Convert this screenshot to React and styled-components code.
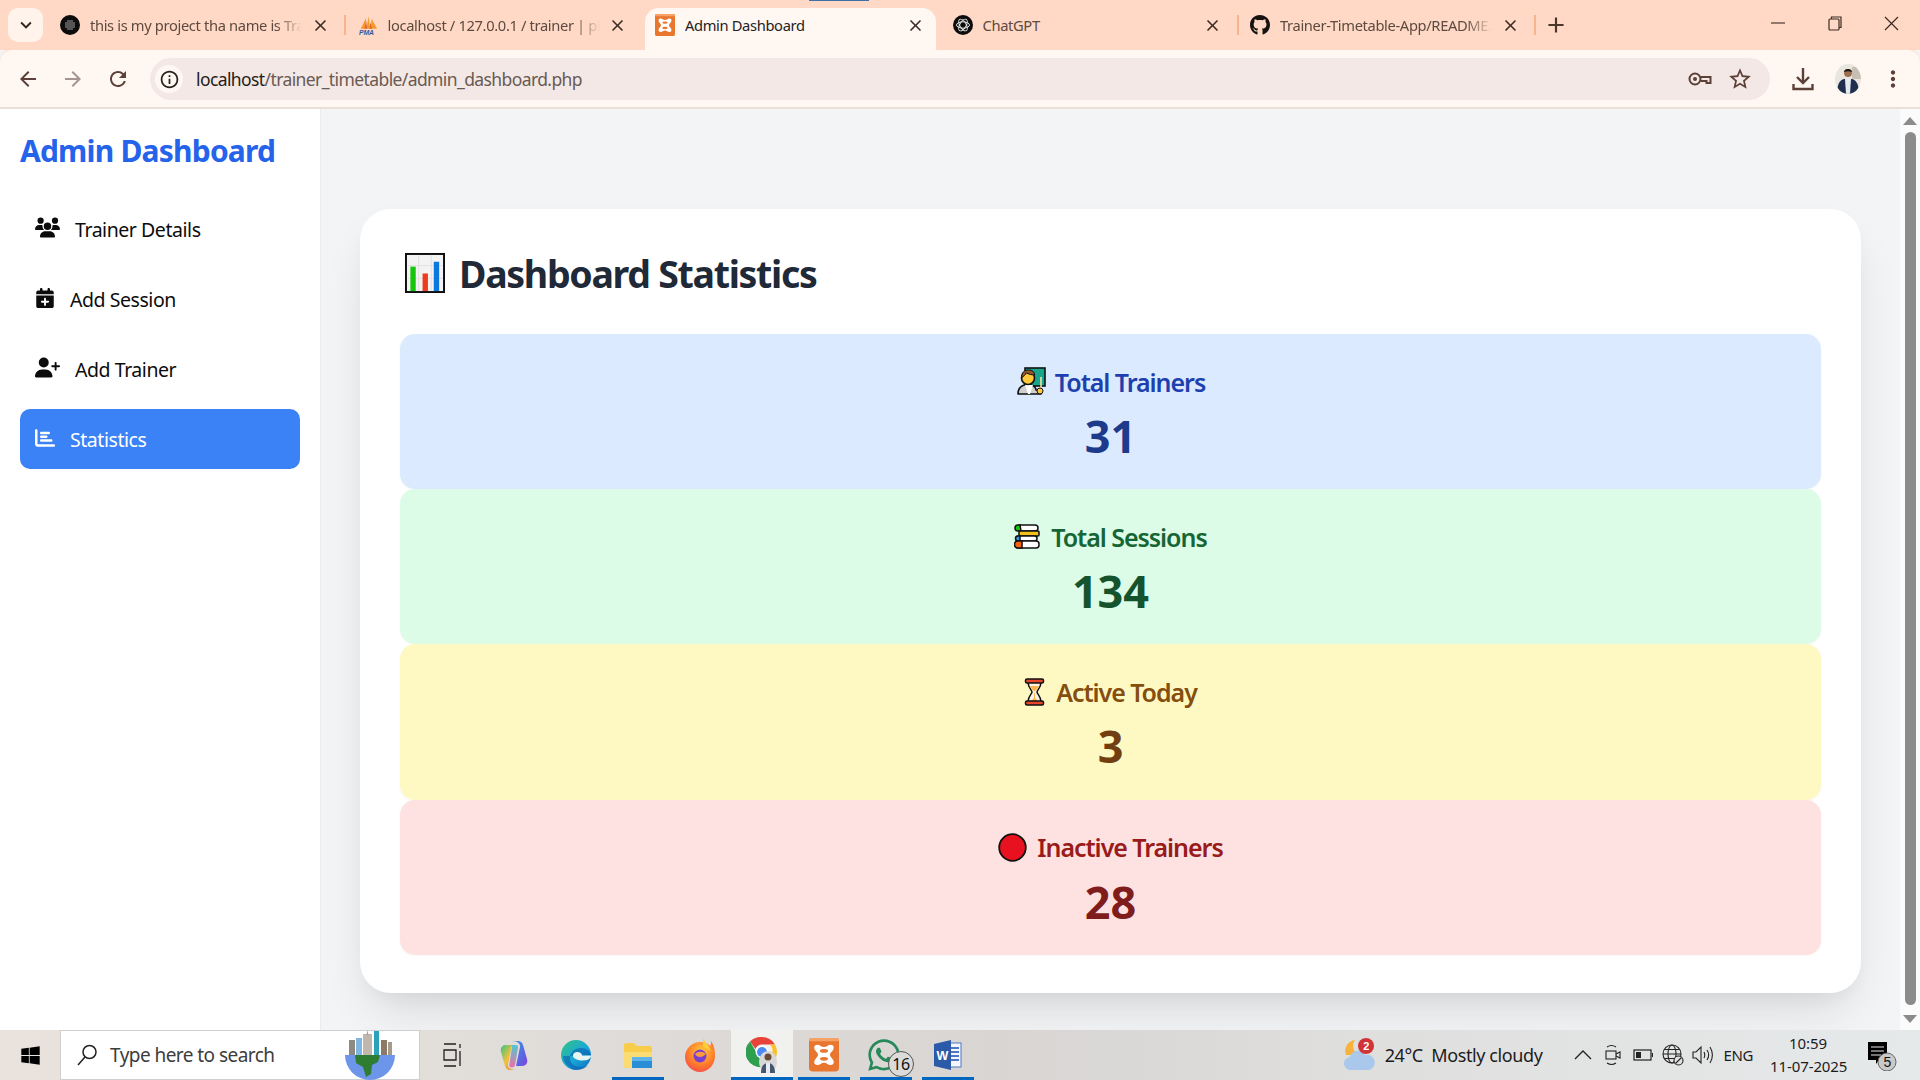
import React from 'react'
import styled, { createGlobalStyle } from 'styled-components'
import { FaUsers, FaCalendarPlus, FaUserPlus, FaChartBar, FaGithub, FaWhatsapp, FaWindows } from 'react-icons/fa6'
import { MdArrowBack, MdArrowForward, MdRefresh, MdInfoOutline, MdStarBorder, MdMoreVert, MdKeyboardArrowDown, MdClose, MdAdd } from 'react-icons/md'

const GlobalStyle = createGlobalStyle`
  html, body {
    margin: 0;
    padding: 0;
    width: 1920px;
    height: 1080px;
    overflow: hidden;
    background: #f3f4f6;
    font-family: 'Noto Sans', 'Open Sans', sans-serif;
  }
  * { box-sizing: border-box; }
`

const Screen = styled.div`
  width: 1920px;
  height: 1080px;
  display: flex;
  flex-direction: column;
  overflow: hidden;
`

/* browser tabs */
const TabStrip = styled.div`
  height: 50px;
  flex: none;
  display: flex;
  align-items: flex-end;
  background: #ffd9c5;
  position: relative;
`

const LoadingBar = styled.div`
  position: absolute;
  top: 0;
  left: 809px;
  width: 60px;
  height: 1px;
  background: #3f6fa8;
`

const TabMenu = styled.div`
  width: 35px;
  height: 34px;
  margin: 0 7px 8px 8px;
  border-radius: 10px;
  background: #fff3eb;
  display: flex;
  align-items: center;
  justify-content: center;
  font-size: 22px;
  color: #33241d;
`

const Tab = styled.div`
  width: ${p => (p.$active ? '291px' : '297.5px')};
  margin-right: ${p => (p.$active ? '6.500px' : '0')};
  height: 42px;
  flex: none;
  display: flex;
  align-items: center;
  padding: 0 0 8px 10px;
  position: relative;
  color: ${p => (p.$active ? '#26201d' : '#5d4a40')};
  background: ${p => (p.$active ? '#fff7f2' : 'transparent')};
  border-radius: 14px 14px 0 0;

  &::after {
    content: '';
    display: ${p => (p.$sep ? 'block' : 'none')};
    position: absolute;
    left: 294px;
    top: 7px;
    width: 2px;
    height: 20px;
    background: #f7b48d;
  }
`

const Favicon = styled.div`
  width: 20px;
  height: 20px;
  flex: none;
  display: flex;
  align-items: center;
  justify-content: center;
  font-size: 22px;
  color: #17120f;
`

const TabTitle = styled.div`
  width: 212px;
  margin-left: 10px;
  overflow: hidden;
  white-space: nowrap;
  font-size: 14.7px;
  letter-spacing: -0.35px;
  -webkit-mask-image: ${p => (p.$fade ? 'linear-gradient(90deg, #000 88%, transparent 100%)' : 'none')};
  mask-image: ${p => (p.$fade ? 'linear-gradient(90deg, #000 88%, transparent 100%)' : 'none')};
`

const TabClose = styled.div`
  width: 20px;
  display: flex;
  justify-content: center;
  margin-left: 8px;
  font-size: 19px;
  color: #3a2a22;
`

const NewTab = styled.div`
  width: 30px;
  height: 42px;
  margin-left: 3px;
  padding-bottom: 8px;
  display: flex;
  align-items: center;
  justify-content: center;
  font-size: 26px;
  color: #4a362b;
`

const WindowControls = styled.div`
  margin-left: auto;
  height: 50px;
  display: flex;
  align-items: center;
  padding-bottom: 4px;
`

const WindowButton = styled.div`
  width: 57px;
  display: flex;
  justify-content: center;
`

/* toolbar with the address bar */
const Toolbar = styled.div`
  height: 59px;
  flex: none;
  display: flex;
  align-items: center;
  padding: 1px 0 0 5px;
  background: #fff7f2;
  border-bottom: 2px solid #ebe0d9;
  border-radius: 12px 12px 0 0;
  box-shadow: 0 -1px 0 #ffd9c5;
`

const ToolButton = styled.div`
  width: ${p => p.$w || 45}px;
  flex: none;
  display: flex;
  align-items: center;
  justify-content: center;
  font-size: ${p => p.$size || 24}px;
  color: ${p => p.$color || '#5d4037'};
`

const AddressBar = styled.div`
  width: 1620px;
  height: 42px;
  margin: 0 10px;
  flex: none;
  display: flex;
  align-items: center;
  padding: 0 0 0 5px;
  border-radius: 21px;
  background: #f3e8e6;
`

const SiteInfo = styled.div`
  width: 28px;
  height: 28px;
  border-radius: 50%;
  background: #fff7f2;
  display: flex;
  align-items: center;
  justify-content: center;
  font-size: 21px;
  color: #2b211c;
`

const Url = styled.div`
  margin-left: 13px;
  font-size: 17.5px;
  letter-spacing: -0.6px;
  color: #6a5a52;

  b {
    font-weight: 400;
    color: #251c18;
  }
`

const AddressIcons = styled.div`
  margin-left: auto;
  display: flex;
  align-items: center;
  padding-right: 10px;
`

/* page */
const Content = styled.div`
  flex: 1;
  min-height: 0;
  display: flex;
`

const Sidebar = styled.aside`
  width: 321px;
  flex: none;
  background: #ffffff;
  border-right: 1px solid #ebecee;
  padding: 17px 20px 0;
`

const Brand = styled.h1`
  margin: 0 0 23px;
  font-size: 30px;
  line-height: 50px;
  font-weight: 700;
  letter-spacing: -0.8px;
  color: #2563eb;
  white-space: nowrap;
`

const NavList = styled.nav`
  display: flex;
  flex-direction: column;
  gap: 10px;
`

const NavItem = styled.div`
  height: 60px;
  display: flex;
  align-items: center;
  padding-left: 15px;
  border-radius: 10px;
  font-size: 19.5px;
  letter-spacing: -0.45px;
  color: ${p => (p.$active ? '#ffffff' : '#0c0c0c')};
  background: ${p => (p.$active ? '#3b82f6' : 'transparent')};

  svg {
    font-size: ${p => p.$icon || 20}px;
    margin-right: 15px;
    margin-top: -3px;
    flex: none;
  }
`

const Main = styled.main`
  flex: 1;
  min-width: 0;
  background: #f3f4f6;
  padding: 100px 39px 0 39px;
  overflow: hidden;
`

const Card = styled.section`
  height: 784px;
  padding: 33px 40px 40px;
  background: #ffffff;
  border-radius: 31px;
  box-shadow: 0 25px 50px -12px rgba(0, 0, 0, 0.12), 0 10px 20px -8px rgba(0, 0, 0, 0.06);
`

const CardTitle = styled.h2`
  margin: 0 0 30px;
  height: 62px;
  display: flex;
  align-items: center;
  gap: 14px;
  padding-left: 5px;
  font-size: 37.5px;
  font-weight: 700;
  letter-spacing: -1.3px;
  color: #1f2937;

  svg { flex: none; }
`

const StatList = styled.div`
  display: flex;
  flex-direction: column;
`

const StatCard = styled.div`
  height: 155.2px;
  padding-top: 30px;
  display: flex;
  flex-direction: column;
  align-items: center;
  border-radius: 15px;
  background: ${p => p.$bg};
  box-shadow: 0 1px 3px rgba(0, 0, 0, 0.04);
`

const StatLabel = styled.div`
  height: 35px;
  display: flex;
  align-items: center;
  gap: ${p => p.$gap || 10}px;
  font-size: 25px;
  font-weight: 600;
  letter-spacing: -1.05px;
  color: ${p => p.$color};
  white-space: nowrap;

  svg { flex: none; }
`

const StatValue = styled.div`
  margin-top: 12px;
  font-size: 45px;
  line-height: 50px;
  font-weight: 700;
  color: ${p => p.$color};
`

const Scrollbar = styled.div`
  width: 20px;
  flex: none;
  background: #fbfbfb;
  display: flex;
  flex-direction: column;
  align-items: center;
  padding: 8px 0 7px;
`

const ScrollThumb = styled.div`
  flex: 1;
  width: 11px;
  margin: 7px 0 10px;
  border-radius: 6px;
  background: #8b8b8b;
`

/* windows taskbar */
const Taskbar = styled.footer`
  height: 50px;
  flex: none;
  display: flex;
  align-items: center;
  background: linear-gradient(90deg, #eae2dc 0%, #dfdcd9 30%, #d8d5d3 52%, #dfdfde 72%, #e6e9ea 100%);
  color: #1c1c1c;
`

const StartButton = styled.div`
  width: 60px;
  display: flex;
  justify-content: center;
  font-size: 21px;
  color: #000;
`

const SearchBox = styled.div`
  width: 360px;
  height: 50px;
  display: flex;
  align-items: center;
  padding-left: 16px;
  background: #ffffff;
  border: 1px solid #cfcfcf;
  font-size: 19px;
  letter-spacing: -0.55px;
  color: #3d3d3d;
`

const SearchText = styled.span`
  margin-left: 13px;
`

const SearchArt = styled.div`
  margin-left: auto;
  margin-right: 23px;
  display: flex;
`

const TaskSlot = styled.div`
  width: ${p => p.$w || 62}px;
  height: 50px;
  flex: none;
  display: flex;
  align-items: center;
  justify-content: center;
  position: relative;
  background: ${p => (p.$focus ? '#f1f1f0' : 'transparent')};

  &::after {
    content: '';
    display: ${p => (p.$open ? 'block' : 'none')};
    position: absolute;
    bottom: 0;
    left: ${p => (p.$focus ? 0 : '5px')};
    right: ${p => (p.$focus ? 0 : '5px')};
    height: 3px;
    background: #0067c0;
  }
`

const Tray = styled.div`
  margin-left: auto;
  height: 50px;
  display: flex;
  align-items: center;
  font-size: 18px;
  letter-spacing: -0.4px;
`

const Weather = styled.div`
  display: flex;
  align-items: center;
  gap: 9px;
  margin-right: 25px;
`

const TrayIcon = styled.div`
  display: flex;
  align-items: center;
  justify-content: center;
  width: ${p => p.$w || 30}px;
`

const Lang = styled.div`
  font-size: 15px;
  margin: 0 17px 0 6px;
`

const Clock = styled.div`
  width: 76px;
  text-align: center;
  font-size: 15px;
  line-height: 23px;
  letter-spacing: -0.1px;
  white-space: nowrap;
`

const Notify = styled.div`
  width: 32px;
  margin: 0 21px 0 21px;
  display: flex;
`

/* drawings */
const ChartEmoji = () => (
  <svg width="40" height="40" viewBox="0 0 41 41">
    <rect x="1" y="1" width="39" height="39" fill="#f3f3f3" stroke="#0d0d0d" strokeWidth="2" />
    <path d="M2 13h37M2 26h37M14 2v37M27 2v37" stroke="#e0e0e0" strokeWidth="1" />
    <rect x="5.5" y="14" width="5.5" height="25" fill="#16c60c" />
    <rect x="18" y="21" width="5.5" height="18" fill="#ee3b1c" />
    <rect x="29.5" y="9" width="5.5" height="30" fill="#0a78dc" />
  </svg>
)

const TeacherEmoji = () => (
  <svg width="30" height="29" viewBox="0 0 30 29">
    <rect x="9" y="1" width="20" height="18" fill="#17a58c" stroke="#111" strokeWidth="1.6" />
    <path d="M2 27c0-6 3-8 6-9h7c3 1 5 3 5 5l5 1v3z" fill="#cfcfcf" stroke="#111" strokeWidth="1.6" strokeLinejoin="round" />
    <path d="M9 18l3 9h2l3-9z" fill="#fff" />
    <circle cx="12" cy="11" r="6.5" fill="#ffc83d" stroke="#111" strokeWidth="1.6" />
    <path d="M5.5 11c0-6 3-8 7-8s6 2 6 5c-3 0-6-1-8-2-1 2-3 3-5 5z" fill="#8e562e" stroke="#111" strokeWidth="1" />
    <path d="M25 10v14" stroke="#f4e3a4" strokeWidth="1.6" />
    <circle cx="24" cy="24" r="3" fill="#ffc83d" stroke="#111" strokeWidth="1" />
  </svg>
)

const BooksEmoji = () => (
  <svg width="26" height="25" viewBox="0 0 26 25">
    <g stroke="#111" strokeWidth="1.5">
      <rect x="3" y="1" width="21" height="6" rx="3" fill="#fff" />
      <path d="M6 1H4a3 3 0 0 0 0 6h3z" fill="#16c60c" />
      <rect x="5" y="7" width="20" height="5" rx="1" fill="#f2c11c" />
      <rect x="2" y="12" width="21" height="5" rx="2.5" fill="#fff" />
      <path d="M6 12H4a2.5 2.5 0 0 0 0 5h2z" fill="#2d9bf0" />
      <rect x="1" y="17" width="24" height="7" rx="3" fill="#fff" />
      <path d="M8 17H4a3.5 3.5 0 0 0 0 7h4z" fill="#f7630c" />
    </g>
  </svg>
)

const HourglassEmoji = () => (
  <svg width="21" height="28" viewBox="0 0 21 28">
    <path d="M4 4c0 6 4 8 4 10s-4 4-4 10h13c0-6-4-8-4-10s4-4 4-10z" fill="#fdf3e4" stroke="#111" strokeWidth="1.5" />
    <path d="M6 8h9c-1 3-3 4-4.500 5.500C9 12 7 11 6 8zM10 15h1v5l4 4H6l4-4z" fill="#f9b54a" />
    <rect x="1.500" y="1" width="18" height="4" rx="1.500" fill="#e9452a" stroke="#111" strokeWidth="1.5" />
    <rect x="1.500" y="23" width="18" height="4" rx="1.500" fill="#e9452a" stroke="#111" strokeWidth="1.5" />
  </svg>
)

const RedCircleEmoji = () => (
  <svg width="29" height="29" viewBox="0 0 29 29">
    <circle cx="14.500" cy="14.500" r="13.300" fill="#e8111f" stroke="#111" strokeWidth="1.800" />
  </svg>
)

const DotsFavicon = () => (
  <svg width="20" height="20" viewBox="0 0 20 20">
    <circle cx="10" cy="10" r="10" fill="#0c0c0c" />
    {[-4, -2, 0, 2, 4].flatMap(x => [-4, -2, 0, 2, 4].map(y => (
      Math.hypot(x, y) < 5.2 ? <circle key={`${x}${y}`} cx={10 + x} cy={10 + y} r="0.8" fill="#b5b5b5" /> : null
    )))}
  </svg>
)

const PmaFavicon = () => (
  <svg width="22" height="22" viewBox="0 0 22 22">
    <path d="M3 15L9 3l-1 12zM9 15l3-14 1 14zM14 15l1-11 6 11z" fill="#f39a2c" />
    <path d="M7 15l2-9 1 9zM12.500 15l1-7 2 7z" fill="#e4632a" />
    <text x="1" y="21.500" fontSize="7.500" fontWeight="700" fontStyle="italic" fill="#2c5aa0" fontFamily="Liberation Sans, sans-serif">PMA</text>
  </svg>
)

const XamppLogo = ({ size = 20 }) => (
  <svg width={size} height={size * 1.12} viewBox="0 0 20 22.400" preserveAspectRatio="none">
    <rect width="20" height="22.400" rx="2.500" fill="#e8762f" />
    <rect width="20" height="2.200" rx="1.100" fill="#f6a266" />
    <path d="M5.500 4.500C7.500 4.500 8 6 10 6s2.500-1.500 4.500-1.500c2 0 2.500 2 1.500 3.500-1 1.500-2 2-2 3.200s1 1.800 2 3.300c1 1.500.500 3.500-1.500 3.500-2 0-2.500-1.500-4.500-1.500S7.500 18 5.500 18c-2 0-2.500-2-1.500-3.500 1-1.500 2-2.100 2-3.300S5 9.500 4 8c-1-1.500-.500-3.500 1.500-3.500z" fill="#fff" />
    <ellipse cx="10" cy="8.600" rx="2.700" ry="1.200" fill="#e8762f" />
    <ellipse cx="10" cy="13.900" rx="2.700" ry="1.200" fill="#e8762f" />
  </svg>
)

const GptFavicon = () => (
  <svg width="20" height="20" viewBox="0 0 20 20">
    <circle cx="10" cy="10" r="10" fill="#0c0c0c" />
    <g fill="none" stroke="#e8e8e8" strokeWidth="1">
      <ellipse cx="10" cy="10" rx="6.500" ry="3.200" />
      <ellipse cx="10" cy="10" rx="6.500" ry="3.200" transform="rotate(60 10 10)" />
      <ellipse cx="10" cy="10" rx="6.500" ry="3.200" transform="rotate(120 10 10)" />
    </g>
  </svg>
)

const KeyIcon = () => (
  <svg width="24" height="16" viewBox="0 0 24 16" fill="none" stroke="#5d4037" strokeWidth="2">
    <circle cx="7" cy="8" r="5.500" />
    <circle cx="7" cy="8" r="2" fill="#5d4037" stroke="none" />
    <path d="M12.500 6H22.500V12H18.500V10H12.500" />
  </svg>
)

const DownloadIcon = () => (
  <svg width="22" height="24" viewBox="0 0 22 24" fill="none" stroke="#5d4037" strokeWidth="2.400">
    <path d="M11 1v14M5 10l6 6 6-6" />
    <path d="M1.500 17v5h19v-5" />
  </svg>
)

const Avatar = ({ size = 26 }) => (
  <svg width={size} height={size * 1.15} viewBox="0 0 26 30">
    <defs><clipPath id="avatarClip"><ellipse cx="13" cy="15" rx="13" ry="15" /></clipPath></defs>
    <g clipPath="url(#avatarClip)">
      <rect width="26" height="30" fill="#e9e5df" />
      <rect x="17" y="3" width="9" height="12" fill="#c7bfb3" />
      <path d="M2 30c0-10 3-14 7-15h8c4 1 7 5 7 15z" fill="#1d2f4d" />
      <path d="M10 15h6l-1 15h-4z" fill="#e6e9f0" />
      <circle cx="13" cy="9" r="4" fill="#9d6e4e" />
      <path d="M9 8c0-4 8-4 8 0-3-1-5-1-8 0z" fill="#1b1512" />
    </g>
  </svg>
)

const MinimizeIcon = () => (
  <svg width="14" height="2" viewBox="0 0 14 2"><path d="M0 1h14" stroke="#4a3a30" strokeWidth="1.200" /></svg>
)

const RestoreIcon = () => (
  <svg width="14" height="15" viewBox="0 0 14 15" fill="none" stroke="#3a2c24" strokeWidth="1.200">
    <rect x="1" y="3" width="10" height="11" rx="1" />
    <path d="M3.500 3V1h9.500v10.500h-2" />
  </svg>
)

const CloseIcon = () => (
  <svg width="15" height="15" viewBox="0 0 15 15"><path d="M1 1l13 13M14 1L1 14" stroke="#3a2c24" strokeWidth="1.200" /></svg>
)

const SearchIcon = () => (
  <svg width="20" height="22" viewBox="0 0 20 22" fill="none" stroke="#222" strokeWidth="1.500">
    <circle cx="12.500" cy="8" r="6.500" />
    <path d="M8 13L1 21" />
  </svg>
)

const GlobeArt = () => (
  <svg width="52" height="50" viewBox="0 0 52 50">
    <rect x="5" y="10" width="6" height="17" fill="#8e8a80" />
    <rect x="12" y="8" width="6" height="19" fill="#7fb6e2" />
    <rect x="19" y="4" width="9" height="23" fill="#c2b7ac" />
    <path d="M23.500 0l1 5h-2z" fill="#a89c90" />
    <rect x="30" y="1" width="5" height="26" fill="#2aa3b8" />
    <rect x="37" y="10" width="6" height="17" fill="#8c7a68" />
    <rect x="44" y="12" width="4" height="15" fill="#a59a8a" />
    <path d="M1 25h50a25 25 0 0 1-50 0z" fill="#6d96ea" />
    <path d="M11 25h25l-2 7-6 3-1 9-5 3-3-10-7-4z" fill="#2f7d32" />
  </svg>
)

const TaskViewIcon = () => (
  <svg width="18" height="24" viewBox="0 0 18 24" fill="none" stroke="#222" strokeWidth="1.300">
    <path d="M1 1h12M1 23h12M1 7h12v10H1zM17 1v4M17 8v15" />
  </svg>
)

const CopilotIcon = () => (
  <svg width="28" height="31" viewBox="0 0 28 31">
    <defs>
      <linearGradient id="copA" x1="0" y1="0" x2="1" y2="1"><stop offset="0" stopColor="#2f9de8" /><stop offset="1" stopColor="#7a45dc" /></linearGradient>
      <linearGradient id="copB" x1="0" y1="0" x2="1" y2="1"><stop offset="0" stopColor="#36c28a" /><stop offset="0.5" stopColor="#f2c23a" /><stop offset="1" stopColor="#f0783a" /></linearGradient>
      <linearGradient id="copC" x1="0" y1="0" x2="0" y2="1"><stop offset="0" stopColor="#4fc7d0" /><stop offset="1" stopColor="#ee6fa8" /></linearGradient>
    </defs>
    <path d="M12 1h6c2 0 4 1 5 4l4 14c1 4-1 7-5 7h-6l4-19c.400-3-2-6-8-6z" fill="url(#copA)" />
    <path d="M16 30h-6c-2 0-4-1-5-4L1 12C0 8 2 5 6 5h6L8 24c-.400 3 2 6 8 6z" fill="url(#copB)" />
    <path d="M11 5h5c1.500 0 2.500 1 2 3l-3 17c-.300 1.500-1 2.500-3 2.500-2 0-3-1-2.700-3L12 7z" fill="url(#copC)" />
  </svg>
)

const EdgeIcon = () => (
  <svg width="30" height="30" viewBox="0 0 30 30">
    <defs>
      <linearGradient id="edgeA" x1="0" y1="0" x2="1" y2="1"><stop offset="0" stopColor="#33c481" /><stop offset="0.55" stopColor="#1aa7d8" /><stop offset="1" stopColor="#0c6cc4" /></linearGradient>
    </defs>
    <circle cx="15" cy="15" r="15" fill="url(#edgeA)" />
    <path d="M30 16c0-5-5-8-10-8-6 0-11 4-11 10 0 5 4 9 11 9 3 0 5-1 7-2-2 3-7 5-12 5-3 0-5-1-7-3C4 24 2 20 2 16" fill="#0a5fb0" opacity="0.6" />
    <path d="M16 12c3 0 5 1.500 5 3.500h9c0 1.500-1 5-8 5-5 0-10-1.500-10-5 0-2 2-3.500 4-3.500z" fill="#e8f6f3" />
  </svg>
)

const FolderIcon = () => (
  <svg width="30" height="26" viewBox="0 0 30 26">
    <path d="M1 3a2 2 0 0 1 2-2h8l3 3h13a2 2 0 0 1 2 2v18a2 2 0 0 1-2 2H3a2 2 0 0 1-2-2z" fill="#f8cd4c" />
    <path d="M1 10h28v14a2 2 0 0 1-2 2H3a2 2 0 0 1-2-2z" fill="#fbdc74" />
    <rect x="9" y="15" width="20" height="11" fill="#2a8ed6" />
    <rect x="9" y="15" width="20" height="4" fill="#5cb4e8" />
  </svg>
)

const FirefoxIcon = () => (
  <svg width="30" height="34" viewBox="0 0 30 34">
    <defs>
      <radialGradient id="foxA" cx="0.55" cy="0.35" r="0.8"><stop offset="0" stopColor="#ffd13c" /><stop offset="0.55" stopColor="#ff7a2a" /><stop offset="1" stopColor="#f0385c" /></radialGradient>
    </defs>
    <path d="M15 4c4 0 7 1 10 4 1-1 1-3 1-5 3 4 4 9 4 15 0 9-7 16-15 16S0 27 0 19C0 11 7 4 15 4z" fill="url(#foxA)" />
    <path d="M18 0c2 5 6 7 8 13l-8-4z" fill="#ffce3a" />
    <circle cx="15" cy="18" r="6.500" fill="#7a3fd1" />
    <path d="M10 16c3-3 8-3 11 0-2 1-3 3-6 3-2 0-4-1-5-3z" fill="#ff9a3a" />
  </svg>
)

const ChromeIcon = () => (
  <svg width="32" height="38" viewBox="0 0 32 38">
    <path d="M16 1a15 15 0 0 1 13 7.500H16a7 7 0 0 0-6.500 4.500L4 5.500A15 15 0 0 1 16 1z" fill="#e8443a" />
    <path d="M29 8.500A15 15 0 0 1 17 31l6.500-11a7 7 0 0 0 0-11.500z" fill="#fbc02d" />
    <path d="M4 5.500l6.500 11a7 7 0 0 0 8 6L17 31A15 15 0 0 1 4 5.500z" fill="#2e9e4f" />
    <circle cx="16" cy="16" r="6.500" fill="#fff" />
    <circle cx="16" cy="16" r="5" fill="#4c8bf5" />
    <ellipse cx="22" cy="26" rx="9" ry="11" fill="#d8d8d8" />
    <path d="M15 37c0-7 3-10 7-10s7 3 7 10z" fill="#45556e" />
    <path d="M20 27h4v10h-4z" fill="#e8ecf2" />
    <circle cx="22" cy="21" r="3.500" fill="#6b4b38" />
  </svg>
)

const WhatsappBadge = styled.div`
  width: 26px;
  height: 26px;
  position: absolute;
  left: 33px;
  top: 21px;
  border-radius: 50%;
  border: 1px solid #555;
  background: #dbdbd9;
  display: flex;
  align-items: center;
  justify-content: center;
  font-size: 16px;
  letter-spacing: -0.5px;
  color: #111;
`

const WhatsappGlyph = styled(FaWhatsapp)`
  font-size: 36px;
  color: #25895a;
  margin-left: -4px;
`

const WordIcon = () => (
  <svg width="28" height="30" viewBox="0 0 28 30">
    <rect x="8" y="3" width="19" height="24" fill="#f4f6fb" stroke="#4c79c4" />
    <path d="M17 8h8M17 12h8M17 16h8M17 20h8" stroke="#4c79c4" strokeWidth="1.800" />
    <path d="M0 4l17-4v30L0 26z" fill="#2b5aa8" />
    <text x="2.500" y="20" fontSize="12.500" fontWeight="700" fill="#fff" fontFamily="Liberation Sans, sans-serif">W</text>
  </svg>
)

const WeatherIcon = () => (
  <svg width="32" height="34" viewBox="0 0 32 34">
    <path d="M11 2a10 10 0 0 0 4 15H2A11 11 0 0 1 11 2z" fill="#f6b23c" />
    <path d="M7 32a6.500 6.500 0 0 1-1-13 8 8 0 0 1 15-2 7.500 7.500 0 0 1 4 15z" fill="#a9c8ec" />
    <circle cx="22" cy="8" r="8" fill="#d13438" />
    <text x="19.200" y="12" fontSize="11" fontWeight="700" fill="#fff" fontFamily="Liberation Sans, sans-serif">2</text>
  </svg>
)

const CaretIcon = () => (
  <svg width="18" height="10" viewBox="0 0 18 10" fill="none" stroke="#222" strokeWidth="1.300"><path d="M1 9l8-8 8 8" /></svg>
)

const MeetIcon = () => (
  <svg width="16" height="22" viewBox="0 0 16 22" fill="none" stroke="#222" strokeWidth="1.100">
    <path d="M2 3c3-2 6-2 9 0M2 19c3 2 6 2 9 0" />
    <rect x="1" y="7" width="10" height="8" />
    <path d="M11 10l4-2v6l-4-2" />
  </svg>
)

const BatteryIcon = () => (
  <svg width="20" height="12" viewBox="0 0 20 12" fill="none" stroke="#222" strokeWidth="1.200">
    <rect x="1" y="1" width="17" height="10" />
    <rect x="3" y="3" width="5" height="6" fill="#222" stroke="none" />
    <path d="M19.500 4v4" />
  </svg>
)

const NetIcon = () => (
  <svg width="22" height="22" viewBox="0 0 22 22" fill="none" stroke="#222" strokeWidth="1.100">
    <circle cx="10" cy="10" r="9" />
    <ellipse cx="10" cy="10" rx="4" ry="9" />
    <path d="M1 10h18M2.500 5.500h15M2.500 14.500h15" />
    <circle cx="16.500" cy="16.500" r="4.500" fill="#e2e1e0" />
    <path d="M13.500 19.500l6-6" />
  </svg>
)

const SpeakerIcon = () => (
  <svg width="22" height="20" viewBox="0 0 22 20" fill="none" stroke="#222" strokeWidth="1.100">
    <path d="M1 7h3l5-5v16l-5-5H1z" />
    <path d="M12 7c1 2 1 4 0 6M15 5c2 3 2 7 0 10M18 2c3 5 3 11 0 16" />
  </svg>
)

const NotifyIcon = () => (
  <svg width="32" height="32" viewBox="0 0 32 32">
    <path d="M1 3h19v18h-8l-3 4v-4H1z" fill="#000" />
    <path d="M4 8h13M4 12h13M4 16h10" stroke="#e8e8e8" strokeWidth="1.200" />
    <circle cx="20" cy="23" r="9" fill="#c9c9c9" stroke="#666" strokeWidth="1" />
    <text x="16.500" y="28" fontSize="14" fill="#111" fontFamily="Liberation Sans, sans-serif">5</text>
  </svg>
)

const tabs = [
  { title: 'this is my project tha name is Trainer', icon: <DotsFavicon />, sep: true, fade: true },
  { title: 'localhost / 127.0.0.1 / trainer | phpMyAdmin', icon: <PmaFavicon />, fade: true },
  { title: 'Admin Dashboard', icon: <XamppLogo size={20} />, active: true },
  { title: 'ChatGPT', icon: <GptFavicon />, sep: true },
  { title: 'Trainer-Timetable-App/README.md', icon: <FaGithub />, sep: true, fade: true },
]

const navItems = [
  { label: 'Trainer Details', icon: <FaUsers />, size: 25 },
  { label: 'Add Session', icon: <FaCalendarPlus /> },
  { label: 'Add Trainer', icon: <FaUserPlus />, size: 25 },
  { label: 'Statistics', icon: <FaChartBar />, active: true },
]

const stats = [
  { label: 'Total Trainers', value: 31, emoji: <TeacherEmoji />, bg: '#dbeafe', text: '#1e40af', num: '#1e3a8a', gap: 9 },
  { label: 'Total Sessions', value: 134, emoji: <BooksEmoji />, bg: '#dcfce7', text: '#166534', num: '#14532d', gap: 11 },
  { label: 'Active Today', value: 3, emoji: <HourglassEmoji />, bg: '#fef9c3', text: '#854d0e', num: '#713f12', gap: 11 },
  { label: 'Inactive Trainers', value: 28, emoji: <RedCircleEmoji />, bg: '#fee2e2', text: '#991b1b', num: '#7f1d1d', gap: 10 },
]

export default function App() {
  return (
    <Screen>
      <GlobalStyle />
      <TabStrip>
        <LoadingBar />
        <TabMenu><MdKeyboardArrowDown /></TabMenu>
        {tabs.map(t => (
          <Tab key={t.title} $active={t.active} $sep={t.sep}>
            <Favicon>{t.icon}</Favicon>
            <TabTitle $fade={t.fade}>{t.title}</TabTitle>
            <TabClose><MdClose /></TabClose>
          </Tab>
        ))}
        <NewTab><MdAdd /></NewTab>
        <WindowControls>
          <WindowButton><MinimizeIcon /></WindowButton>
          <WindowButton><RestoreIcon /></WindowButton>
          <WindowButton><CloseIcon /></WindowButton>
        </WindowControls>
      </TabStrip>

      <Toolbar>
        <ToolButton><MdArrowBack /></ToolButton>
        <ToolButton $color="#a3958d"><MdArrowForward /></ToolButton>
        <ToolButton><MdRefresh /></ToolButton>
        <AddressBar>
          <SiteInfo><MdInfoOutline /></SiteInfo>
          <Url><b>localhost</b>/trainer_timetable/admin_dashboard.php</Url>
          <AddressIcons>
            <ToolButton $w={40}><KeyIcon /></ToolButton>
            <ToolButton $w={40} $size={26}><MdStarBorder /></ToolButton>
          </AddressIcons>
        </AddressBar>
        <ToolButton><DownloadIcon /></ToolButton>
        <ToolButton><Avatar /></ToolButton>
        <ToolButton $size={26}><MdMoreVert /></ToolButton>
      </Toolbar>

      <Content>
        <Sidebar>
          <Brand>Admin Dashboard</Brand>
          <NavList>
            {navItems.map(item => (
              <NavItem key={item.label} $active={item.active} $icon={item.size}>
                {item.icon}
                {item.label}
              </NavItem>
            ))}
          </NavList>
        </Sidebar>

        <Main>
          <Card>
            <CardTitle>
              <ChartEmoji />
              Dashboard Statistics
            </CardTitle>
            <StatList>
              {stats.map(s => (
                <StatCard key={s.label} $bg={s.bg}>
                  <StatLabel $color={s.text} $gap={s.gap}>
                    {s.emoji}
                    {s.label}
                  </StatLabel>
                  <StatValue $color={s.num}>{s.value}</StatValue>
                </StatCard>
              ))}
            </StatList>
          </Card>
        </Main>

        <Scrollbar>
          <svg width="14" height="8" viewBox="0 0 14 8"><path d="M7 0l7 8H0z" fill="#8b8b8b" /></svg>
          <ScrollThumb />
          <svg width="14" height="8" viewBox="0 0 14 8"><path d="M7 8l7-8H0z" fill="#8b8b8b" /></svg>
        </Scrollbar>
      </Content>

      <Taskbar>
        <StartButton><FaWindows /></StartButton>
        <SearchBox>
          <SearchIcon />
          <SearchText>Type here to search</SearchText>
          <SearchArt><GlobeArt /></SearchArt>
        </SearchBox>
        <TaskSlot $w={63}><TaskViewIcon /></TaskSlot>
        <TaskSlot><CopilotIcon /></TaskSlot>
        <TaskSlot><EdgeIcon /></TaskSlot>
        <TaskSlot $open><FolderIcon /></TaskSlot>
        <TaskSlot><FirefoxIcon /></TaskSlot>
        <TaskSlot $open $focus><ChromeIcon /></TaskSlot>
        <TaskSlot $open><XamppLogo size={30} /></TaskSlot>
        <TaskSlot $open><WhatsappGlyph /><WhatsappBadge>16</WhatsappBadge></TaskSlot>
        <TaskSlot $open><WordIcon /></TaskSlot>
        <Tray>
          <Weather>
            <WeatherIcon />
            <span>24°C&nbsp;&nbsp;Mostly cloudy</span>
          </Weather>
          <TrayIcon><CaretIcon /></TrayIcon>
          <TrayIcon><MeetIcon /></TrayIcon>
          <TrayIcon><BatteryIcon /></TrayIcon>
          <TrayIcon><NetIcon /></TrayIcon>
          <TrayIcon><SpeakerIcon /></TrayIcon>
          <Lang>ENG</Lang>
          <Clock>10:59<br />11-07-2025</Clock>
          <Notify><NotifyIcon /></Notify>
        </Tray>
      </Taskbar>
    </Screen>
  )
}
